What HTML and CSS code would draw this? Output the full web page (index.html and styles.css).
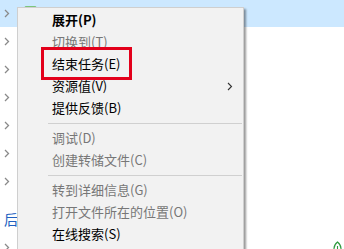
FILE: index.html
```html
<!DOCTYPE html>
<html lang="zh-CN">
<head>
<meta charset="utf-8">
<link rel="stylesheet" href="styles.css">
</head>
<body>
<div class="page">
  <div class="list">
    <div class="row selected">
      <svg class="chev" width="6" height="9" viewBox="0 0 6 9"><polyline points="1,1 4.5,4.5 1,8" fill="none" stroke="#8a8a8a" stroke-width="1.3"/></svg>
      <span class="app-icon"></span>
    </div>
    <div class="row"><svg class="chev" width="6" height="9" viewBox="0 0 6 9"><polyline points="1,1 4.5,4.5 1,8" fill="none" stroke="#8a8a8a" stroke-width="1.3"/></svg></div>
    <div class="row"><svg class="chev" width="6" height="9" viewBox="0 0 6 9"><polyline points="1,1 4.5,4.5 1,8" fill="none" stroke="#8a8a8a" stroke-width="1.3"/></svg></div>
    <div class="row"><svg class="chev" width="6" height="9" viewBox="0 0 6 9"><polyline points="1,1 4.5,4.5 1,8" fill="none" stroke="#8a8a8a" stroke-width="1.3"/></svg></div>
    <div class="row"><svg class="chev" width="6" height="9" viewBox="0 0 6 9"><polyline points="1,1 4.5,4.5 1,8" fill="none" stroke="#8a8a8a" stroke-width="1.3"/></svg></div>
    <div class="row"><svg class="chev" width="6" height="9" viewBox="0 0 6 9"><polyline points="1,1 4.5,4.5 1,8" fill="none" stroke="#8a8a8a" stroke-width="1.3"/></svg></div>
    <div class="row"><svg class="chev" width="6" height="9" viewBox="0 0 6 9"><polyline points="1,1 4.5,4.5 1,8" fill="none" stroke="#8a8a8a" stroke-width="1.3"/></svg></div>
    <div class="group-heading">后</div>
    <div class="row">
      <svg class="chev" width="6" height="9" viewBox="0 0 6 9"><polyline points="1,1 4.5,4.5 1,8" fill="none" stroke="#8a8a8a" stroke-width="1.3"/></svg>
      <svg class="leaf" width="9" height="12" viewBox="0 0 9 12"><path d="M4.5 1 C7.5 3.5 8 6 8 7.5 C8 9.8 6.4 11 4.5 11 C2.6 11 1 9.8 1 7.5 C1 6 1.5 3.5 4.5 1 Z M4.5 5 L4.5 12" fill="none" stroke="#2f9a3e" stroke-width="1.1"/></svg>
    </div>
  </div>

  <div class="menu">
    <div class="item bold">展开(P)</div>
    <div class="item disabled">切换到(T)</div>
    <div class="item">结束任务(E)</div>
    <div class="item">资源值(V)
      <svg class="sub-arrow" width="6" height="9" viewBox="0 0 6 9"><polyline points="1,1 4.5,4.5 1,8" fill="none" stroke="#333" stroke-width="1.1"/></svg>
    </div>
    <div class="item">提供反馈(B)</div>
    <div class="sep"></div>
    <div class="item disabled">调试(D)</div>
    <div class="item disabled">创建转储文件(C)</div>
    <div class="sep"></div>
    <div class="item disabled">转到详细信息(G)</div>
    <div class="item disabled">打开文件所在的位置(O)</div>
    <div class="item">在线搜索(S)</div>
  </div>

  <div class="highlight-box"></div>
</div>
</body>
</html>
```

FILE: styles.css
```css
html, body {
  margin: 0;
  padding: 0;
  background: #ffffff;
  overflow: hidden;
}

.page {
  position: relative;
  width: 344px;
  height: 249px;
  overflow: hidden;
  font-family: "Noto Sans CJK SC", "Microsoft YaHei", sans-serif;
}

.list {
  display: flex;
  flex-direction: column;
  margin-top: -1px;
}

.row {
  position: relative;
  height: 28px;
  display: flex;
  align-items: center;
  flex-shrink: 0;
}

.row.selected {
  background: #cce8ff;
}

.chev {
  margin-left: 4px;
  display: block;
}

.app-icon {
  display: block;
  width: 13px;
  height: 13px;
  margin-left: 14px;
  margin-top: -2px;
  border: 1px solid #7cc47c;
  border-radius: 2px;
  box-sizing: border-box;
}

.leaf {
  margin-left: auto;
  margin-right: 2px;
  margin-top: -1px;
  display: block;
}

.group-heading {
  height: 38px;
  box-sizing: border-box;
  padding: 14px 0 0 4px;
  font-size: 14px;
  line-height: 20px;
  color: #2060c0;
  white-space: nowrap;
  flex-shrink: 0;
}

.menu {
  position: absolute;
  left: 17px;
  top: 7px;
  width: 227px;
  height: 260px;
  box-sizing: border-box;
  background: #f2f2f2;
  border: 1px solid #cfcfcf;
  box-shadow: 2px 2px 2px rgba(0, 0, 0, 0.4);
  padding-top: 1px;
}

.item {
  position: relative;
  height: 22px;
  line-height: 22px;
  padding-left: 34px;
  font-size: 13px;
  color: #000;
  white-space: nowrap;
}

.item.bold {
  font-weight: bold;
}

.item.disabled {
  color: #777777;
}

.sub-arrow {
  position: absolute;
  right: 10px;
  top: 7px;
}

.sep {
  height: 8px;
  display: flex;
  align-items: center;
  padding-left: 30px;
  padding-right: 1px;
}

.sep::after {
  content: "";
  display: block;
  flex: 1;
  height: 1px;
  background: #d0d0d0;
}

.highlight-box {
  position: absolute;
  left: 41px;
  top: 47px;
  width: 91px;
  height: 33px;
  box-sizing: border-box;
  border: 3px solid #e3001b;
}
```
